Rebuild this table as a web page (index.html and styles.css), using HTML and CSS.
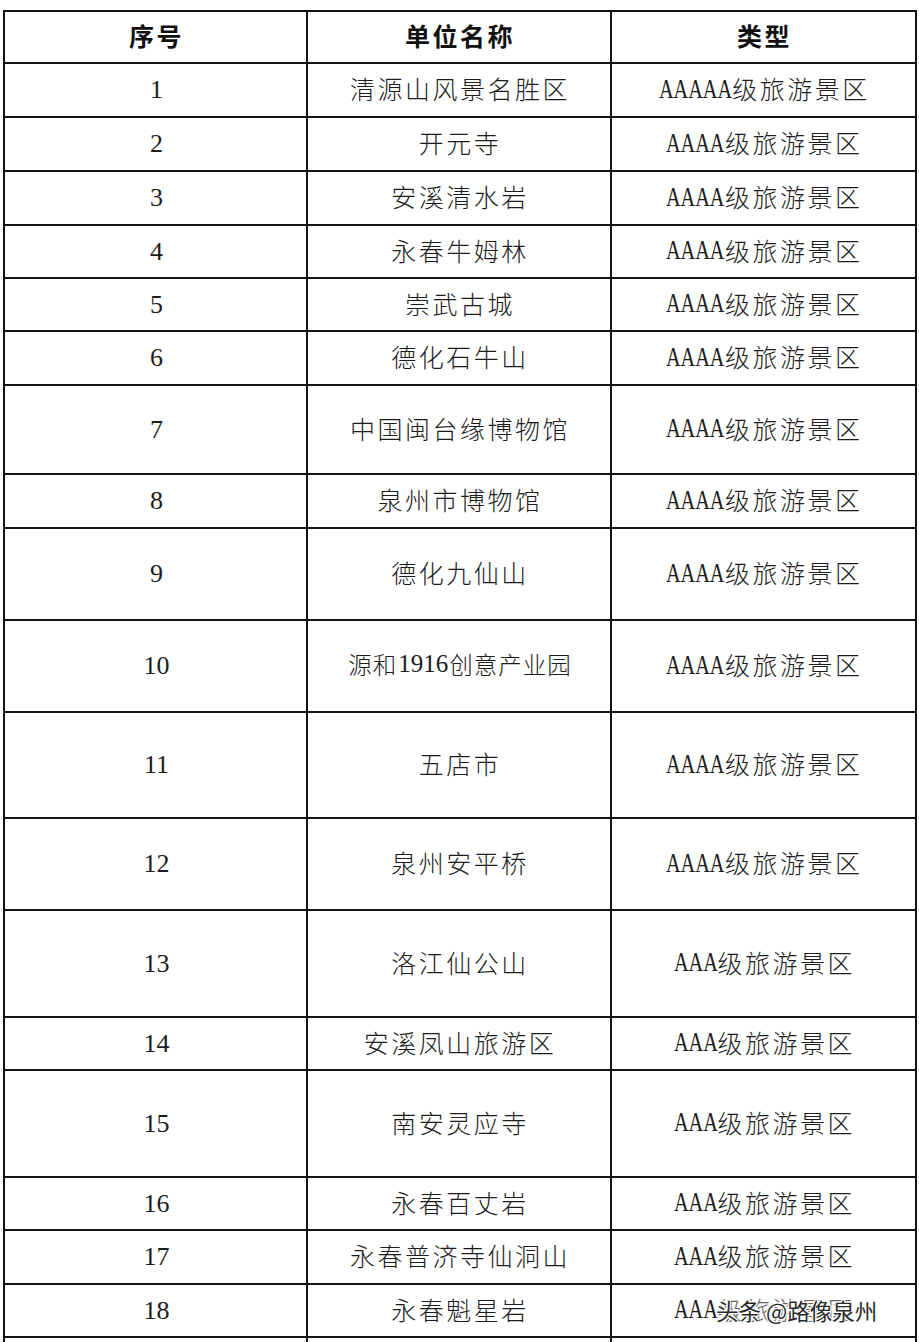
FILE: index.html
```html
<!DOCTYPE html>
<html lang="zh-CN">
<head>
<meta charset="utf-8">
<title>泉州旅游景区名单</title>
<link rel="stylesheet" href="styles.css">
</head>
<body>
<div class="sheet" role="table">
  <div class="row r52 head" role="row">
    <div class="cell" role="columnheader">序号</div>
    <div class="cell" role="columnheader">单位名称</div>
    <div class="cell" role="columnheader">类型</div>
  </div>
  <div class="row r54" role="row">
    <div class="cell num">1</div>
    <div class="cell">清源山风景名胜区</div>
    <div class="cell"><span class="lat a5">AAAAA</span>级旅游景区</div>
  </div>
  <div class="row r54" role="row">
    <div class="cell num">2</div>
    <div class="cell">开元寺</div>
    <div class="cell"><span class="lat a4">AAAA</span>级旅游景区</div>
  </div>
  <div class="row r54" role="row">
    <div class="cell num">3</div>
    <div class="cell">安溪清水岩</div>
    <div class="cell"><span class="lat a4">AAAA</span>级旅游景区</div>
  </div>
  <div class="row r53" role="row">
    <div class="cell num">4</div>
    <div class="cell">永春牛姆林</div>
    <div class="cell"><span class="lat a4">AAAA</span>级旅游景区</div>
  </div>
  <div class="row r53" role="row">
    <div class="cell num">5</div>
    <div class="cell">崇武古城</div>
    <div class="cell"><span class="lat a4">AAAA</span>级旅游景区</div>
  </div>
  <div class="row r54" role="row">
    <div class="cell num">6</div>
    <div class="cell">德化石牛山</div>
    <div class="cell"><span class="lat a4">AAAA</span>级旅游景区</div>
  </div>
  <div class="row r89" role="row">
    <div class="cell num">7</div>
    <div class="cell">中国闽台缘博物馆</div>
    <div class="cell"><span class="lat a4">AAAA</span>级旅游景区</div>
  </div>
  <div class="row r54" role="row">
    <div class="cell num">8</div>
    <div class="cell">泉州市博物馆</div>
    <div class="cell"><span class="lat a4">AAAA</span>级旅游景区</div>
  </div>
  <div class="row r92" role="row">
    <div class="cell num">9</div>
    <div class="cell">德化九仙山</div>
    <div class="cell"><span class="lat a4">AAAA</span>级旅游景区</div>
  </div>
  <div class="row r92" role="row">
    <div class="cell num">10</div>
    <div class="cell small">源和<span class="digits">1916</span>创意产业园</div>
    <div class="cell"><span class="lat a4">AAAA</span>级旅游景区</div>
  </div>
  <div class="row r106" role="row">
    <div class="cell num">11</div>
    <div class="cell">五店市</div>
    <div class="cell"><span class="lat a4">AAAA</span>级旅游景区</div>
  </div>
  <div class="row r92" role="row">
    <div class="cell num">12</div>
    <div class="cell">泉州安平桥</div>
    <div class="cell"><span class="lat a4">AAAA</span>级旅游景区</div>
  </div>
  <div class="row r107" role="row">
    <div class="cell num">13</div>
    <div class="cell">洛江仙公山</div>
    <div class="cell"><span class="lat a3">AAA</span>级旅游景区</div>
  </div>
  <div class="row r53" role="row">
    <div class="cell num">14</div>
    <div class="cell">安溪凤山旅游区</div>
    <div class="cell"><span class="lat a3">AAA</span>级旅游景区</div>
  </div>
  <div class="row r107" role="row">
    <div class="cell num">15</div>
    <div class="cell">南安灵应寺</div>
    <div class="cell"><span class="lat a3">AAA</span>级旅游景区</div>
  </div>
  <div class="row r53" role="row">
    <div class="cell num">16</div>
    <div class="cell">永春百丈岩</div>
    <div class="cell"><span class="lat a3">AAA</span>级旅游景区</div>
  </div>
  <div class="row r54" role="row">
    <div class="cell num">17</div>
    <div class="cell">永春普济寺仙洞山</div>
    <div class="cell"><span class="lat a3">AAA</span>级旅游景区</div>
  </div>
  <div class="row r53" role="row">
    <div class="cell num">18</div>
    <div class="cell">永春魁星岩</div>
    <div class="cell marked"><span class="lat a3">AAA</span>级旅游景区<span class="watermark">头条 @路像泉州</span></div>
  </div>
  <div class="row r54" role="row">
    <div class="cell num"></div>
    <div class="cell"></div>
    <div class="cell"></div>
  </div>
</div>
</body>
</html>
```

FILE: styles.css
```css
html, body {
  margin: 0;
  padding: 0;
  background: #ffffff;
}

body {
  font-family: "Noto Sans CJK SC", "Noto Sans", sans-serif;
  color: #1c1c1c;
}

.sheet {
  margin: 10px 0 0 3px;
  width: 914px;
  border-top: 2px solid #141414;
  border-left: 2px solid #141414;
  box-sizing: border-box;
}

.row {
  display: grid;
  grid-template-columns: 303px 304px 305px;
}

.cell {
  box-sizing: border-box;
  border-right: 2px solid #141414;
  border-bottom: 2px solid #141414;
  display: flex;
  align-items: center;
  justify-content: center;
  font-size: 25px;
  letter-spacing: 2.5px;
  font-weight: 300;
  white-space: nowrap;
  padding: 0 0 4px 2px;
}

.head .cell {
  font-weight: 700;
  font-size: 25px;
  color: #111;
}

.r52 { height: 52px; }
.r53 { height: 53px; }
.r54 { height: 54px; }
.r89 { height: 89px; }
.r92 { height: 92px; }
.r106 { height: 106px; }
.r107 { height: 107px; }

.num {
  font-family: "Liberation Serif", "Times New Roman", serif;
  font-size: 26px;
  font-weight: 400;
  letter-spacing: 0;
  padding: 0 0 0 2px;
}

.lat {
  display: inline-block;
  font-family: "Liberation Serif", "Times New Roman", serif;
  font-size: 27px;
  font-weight: 400;
  letter-spacing: 0;
  transform: scaleX(0.75);
  transform-origin: left center;
  position: relative;
  top: 1px;
}

.a3 { margin-right: -15px; }
.a4 { margin-right: -19.5px; }
.a5 { margin-right: -24.5px; }

.small {
  font-size: 23.5px;
  letter-spacing: 1px;
}

.digits {
  font-family: "Liberation Serif", "Times New Roman", serif;
  font-size: 25px;
  font-weight: 400;
  letter-spacing: 0;
  padding: 0 1px;
}

.marked {
  position: relative;
}

.watermark {
  position: absolute;
  left: 104px;
  top: 50%;
  transform: translateY(-52%);
  font-size: 22.5px;
  font-weight: 400;
  letter-spacing: 0;
  color: #2a2a2a;
  text-shadow: 1px 1px 0 #fff, -1px -1px 0 #fff, 1px -1px 0 #fff, -1px 1px 0 #fff;
  background: rgba(255, 255, 255, 0.3);
}
```
